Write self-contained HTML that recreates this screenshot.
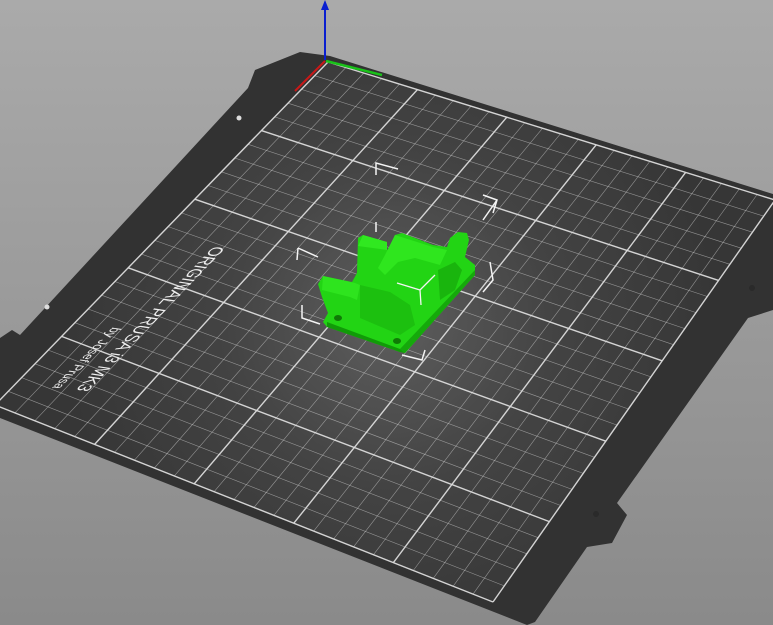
<!DOCTYPE html>
<html><head><meta charset="utf-8"><style>
html,body{margin:0;padding:0;width:773px;height:625px;overflow:hidden;background:linear-gradient(#aaaaaa,#8a8a8a);}
svg{display:block}
</style></head><body>
<svg id="s" width="773" height="625" viewBox="0 0 773 625" xmlns="http://www.w3.org/2000/svg">
<defs>
<radialGradient id="g" cx="390" cy="320" r="330" gradientUnits="userSpaceOnUse">
<stop offset="0" stop-color="#5e5e5e"/><stop offset="0.5" stop-color="#434343"/><stop offset="1" stop-color="#363636"/>
</radialGradient>
</defs>
<path d="M300,52 L330,56 L773,194 L773,310 L748,318 L617,503 L627,515 L612,543 L587,547 L535,622 L527,625 L0,418 L0,338 L12,330 L20,335 L248,88 L255,70 L275,62 Z" fill="#323232"/>
<polygon points="328,62 775,200 493,602 -5,405" fill="url(#g)"/>
<g id="grid" stroke="#dcdcdc" fill="none"></g>
<circle cx="239" cy="118" r="2.5" fill="#ddd"/>
<circle cx="47" cy="307" r="2.5" fill="#ddd"/>
<circle cx="752" cy="288" r="3" fill="#2a2a2a"/>
<circle cx="596" cy="514" r="3" fill="#2a2a2a"/>
<text transform="matrix(-0.69,0.72,-1,-0.15,214,246)" fill="#eee" font-family="Liberation Sans,sans-serif" font-size="17">ORIGINAL PRUSA i3 MK3</text>
<text transform="matrix(-0.71,0.71,-1,-0.15,113,327)" fill="#eee" font-family="Liberation Sans,sans-serif" font-size="13">by Josef Prusa</text>
<!-- axes -->
<line x1="325" y1="60" x2="325" y2="6" stroke="#0a1fd0" stroke-width="2"/>
<polygon points="321,10 325,0 329,10" fill="#0a1fd0"/>
<line x1="326" y1="61" x2="382" y2="75" stroke="#19c219" stroke-width="2.5"/>
<line x1="325" y1="61" x2="295" y2="91" stroke="#c81818" stroke-width="2"/>
<!-- bounding box corners -->
<g stroke="#f4f4f4" stroke-width="1.5" fill="none">
<path d="M376,175 L376,163 L398,169"/><path d="M483,195 L497,200 L493,213 M483,220 L497,200"/>
<path d="M298,248 L318,257 M297,260 L298,248"/><path d="M490,262 L493,280 L483,292"/>
<path d="M302,305 L302,318 L320,324"/><path d="M425,350 L422,360 L402,355"/>
<path d="M376,222 L376,232"/>
</g>
<!-- green part -->
<path d="M318,284 L323,276 L352,282 L357,273 L358,238 L363,235 L387,242 L387,250 L390,247 L395,235 L402,233 L433,245 L447,247 L450,238 L458,232 L467,233 L469,240 L465,257 L475,265 L475,275 L423,333 L405,353 L400,352 L327,327 L323,322 L328,313 L322,297 Z" fill="#22d414"/>
<path d="M327,322 L400,349 L405,353 L400,352 L327,327 Z" fill="#119a08"/>
<path d="M400,349 L475,270 L475,275 L423,333 L405,353 Z" fill="#15a90b"/>
<path d="M322,290 L350,297 L357,300 L360,285 L355,283 L323,276 Z" fill="#2ee41e"/>
<path d="M363,235 L387,242 L387,250 L358,246 Z" fill="#30e820"/>
<path d="M395,235 L433,247 L447,250 L440,265 L415,258 L398,262 L385,275 L378,268 L385,255 Z" fill="#2fe61e"/>
<path d="M360,285 L390,292 L410,305 L415,325 L400,335 L360,318 Z" fill="#1cc00f"/>
<path d="M438,270 L455,262 L462,270 L455,290 L440,300 Z" fill="#19b50d"/>
<ellipse cx="338" cy="318" rx="4" ry="3" fill="#0f7a06"/>
<ellipse cx="397" cy="341" rx="4" ry="3" fill="#0f7a06"/>
<g stroke="#f4f4f4" stroke-width="1.3" fill="none"><path d="M397,283 L420,290 L435,275 M420,290 L421,305"/></g>
</svg>
<script>
var TL=[328,62],TR=[775,200],BR=[493,602],BL=[-5,405];
function P(u,v){var x=(1-u)*(1-v)*TL[0]+u*(1-v)*TR[0]+u*v*BR[0]+(1-u)*v*BL[0];var y=(1-u)*(1-v)*TL[1]+u*(1-v)*TR[1]+u*v*BR[1]+(1-u)*v*BL[1];return [x.toFixed(1),y.toFixed(1)];}
var g=document.getElementById("grid"),h="";
var N=25,M=25;
function L(a,b,w,o){h+='<line x1="'+a[0]+'" y1="'+a[1]+'" x2="'+b[0]+'" y2="'+b[1]+'" stroke-width="'+w+'" stroke-opacity="'+o+'"/>';}
for(var i=0;i<=N;i++){var u=i/N;var m=i%5==0;L(P(u,0),P(u,1),m?1.4:0.6,m?0.95:0.55);}
for(var j=0;j<=M;j++){var v=j/M;var m=j%5==0;L(P(0,v),P(1,v),m?1.4:0.6,m?0.95:0.55);}
g.innerHTML=h;
</script>
</body></html>
